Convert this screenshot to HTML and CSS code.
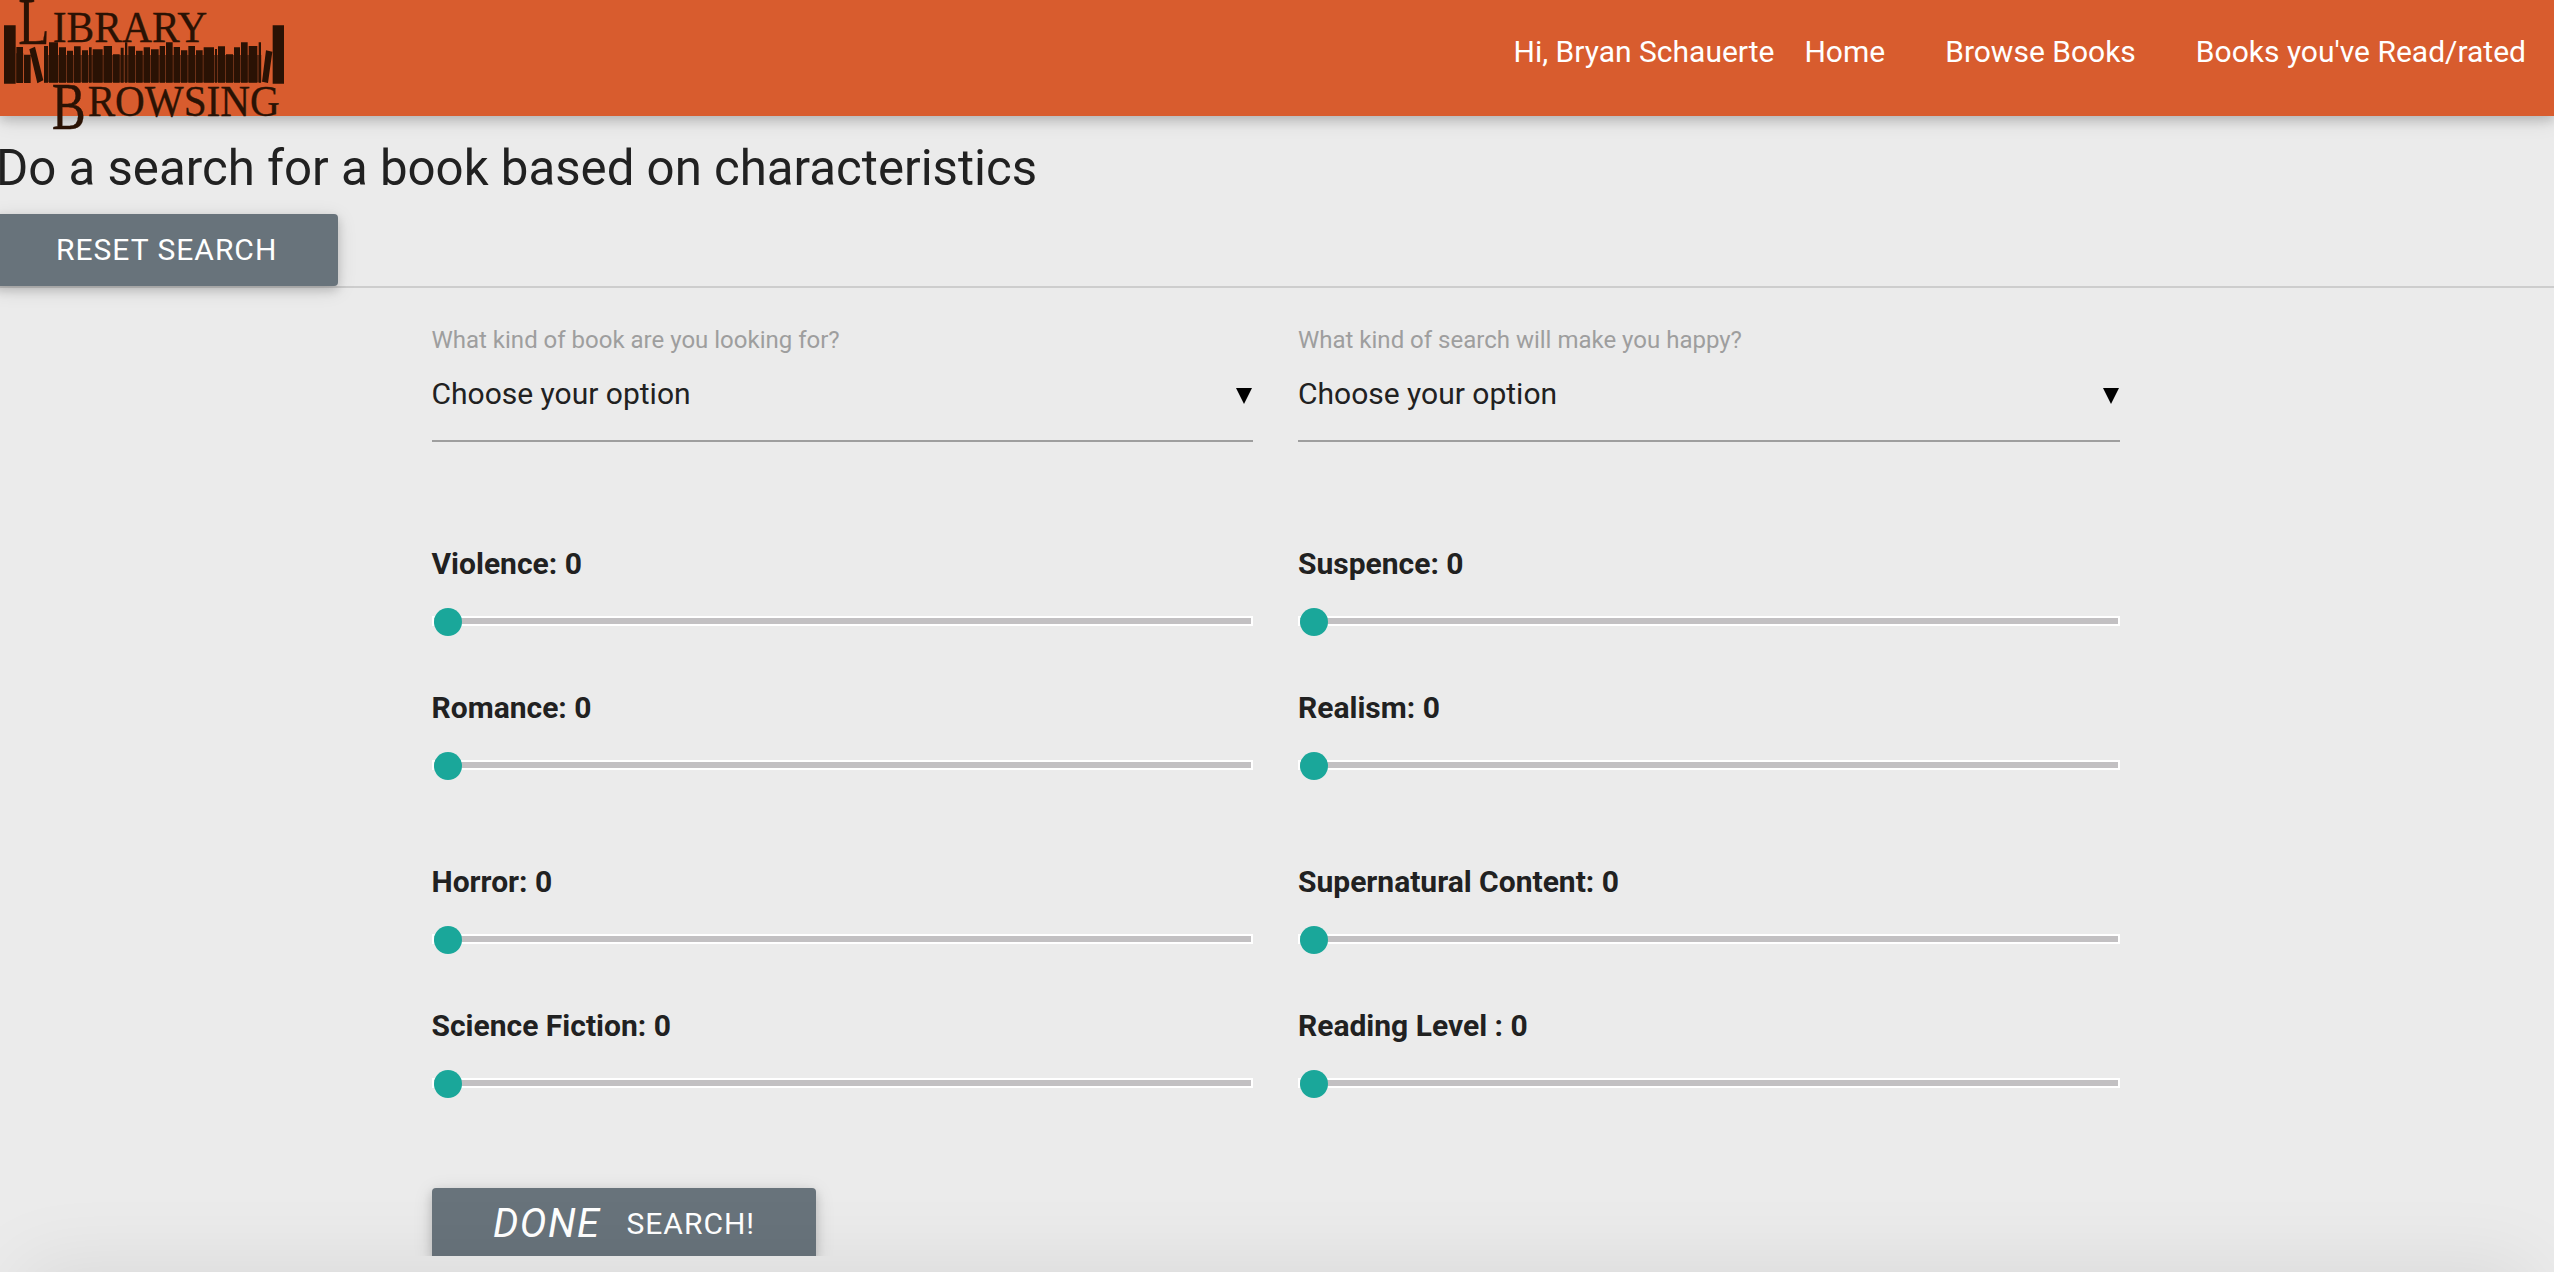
FILE: index.html
```html
<!DOCTYPE html>
<html lang="en">
<head>
<meta charset="utf-8">
<title>Library Browsing</title>
<link rel="stylesheet" href="styles.css">
</head>
<body>
<nav class="nav">
  <a class="logo" href="#">
    <svg width="300" height="134" viewBox="0 0 900 402" aria-label="Library Browsing">
      <g class="logo-text">
        <text x="55" y="132" font-size="202" textLength="94" lengthAdjust="spacingAndGlyphs">L</text>
        <text x="158" y="125" font-size="136" textLength="464" lengthAdjust="spacingAndGlyphs">IBRARY</text>
        <text x="155" y="388" font-size="202" textLength="102" lengthAdjust="spacingAndGlyphs">B</text>
        <text x="263" y="347" font-size="132" textLength="576" lengthAdjust="spacingAndGlyphs">ROWSING</text>
      </g>
      <path class="shelf" d="M48 160H70V247H48zM132 165H784V247H132z"/>
      <path class="books" d="M12 76H47V251H12zM818 76H852V251H818zM49 141H69V249H49zM72 164H92V249H72zM88 148L105 140L130 241L112 250zM132 138H144V248H132zM147 127H174V248H147zM177 142H198V248H177zM201 152H219V248H201zM222 139H242V248H222zM246 151H264V248H246zM267 142H275V248H267zM278 148H308V248H278zM311 138H336V248H311zM339 163H359V248H339zM362 143H371V248H362zM375 127H382V248H375zM385 139H405V248H385zM408 152H428V248H408zM431 142H450V248H431zM453 148H476V248H453zM479 138H495V248H479zM498 127H518V248H498zM521 141H540V248H521zM543 151H562V248H543zM565 138H585V248H565zM588 151H608V248H588zM611 142H642V248H611zM645 147H651V248H645zM654 139H675V248H654zM678 163H699V248H678zM702 142H720V248H702zM723 127H743V248H723zM746 138H772V248H746zM776 127H783V248H776zM798 151L817 155L804 249L786 245z"/>
    </svg>
  </a>
  <span class="greeting">Hi, Bryan Schauerte</span>
  <a class="nav-link" href="#">Home</a>
  <a class="nav-link" href="#">Browse Books</a>
  <a class="nav-link" href="#">Books you've Read/rated</a>
</nav>
<main class="page">
  <header class="intro">
    <h1 class="title">Do a search for a book based on characteristics</h1>
    <button class="btn reset">Reset Search</button>
  </header>
  <form class="form">
    <div class="grid selects">
      <div class="field"><label class="field-label">What kind of book are you looking for?</label><div class="select"><span>Choose your option</span><i class="caret"></i></div></div>
      <div class="field"><label class="field-label">What kind of search will make you happy?</label><div class="select"><span>Choose your option</span><i class="caret"></i></div></div>
    </div>
    <div class="grid sliders">
      <div class="slider"><b class="name">Violence: 0</b><div class="track"><i class="thumb"></i></div></div>
      <div class="slider"><b class="name">Suspence: 0</b><div class="track"><i class="thumb"></i></div></div>
      <div class="slider"><b class="name">Romance: 0</b><div class="track"><i class="thumb"></i></div></div>
      <div class="slider"><b class="name">Realism: 0</b><div class="track"><i class="thumb"></i></div></div>
    </div>
    <div class="grid sliders">
      <div class="slider"><b class="name">Horror: 0</b><div class="track"><i class="thumb"></i></div></div>
      <div class="slider"><b class="name">Supernatural Content: 0</b><div class="track"><i class="thumb"></i></div></div>
      <div class="slider"><b class="name">Science Fiction: 0</b><div class="track"><i class="thumb"></i></div></div>
      <div class="slider"><b class="name">Reading Level : 0</b><div class="track"><i class="thumb"></i></div></div>
    </div>
    <button class="btn submit"><i class="done">done</i><span>Search!</span></button>
  </form>
</main>
<div class="sheet"><div class="sheet-shadow"></div></div>
</body>
</html>
```
FILE: styles.css
```css
* { box-sizing: border-box; }
body {
  margin: 0;
  height: 1272px;
  position: relative;
  overflow: hidden;
  background: #ebebeb;
  color: #212121;
  font: 30px/45px Roboto, sans-serif;
}
.nav {
  position: relative;
  z-index: 1;
  display: flex;
  justify-content: flex-end;
  height: 116px;
  padding-top: 29px;
  background: #d85c2e;
  color: #fff;
  box-shadow: 0 4px 10px rgba(0,0,0,.16), 0 4px 20px rgba(0,0,0,.12);
}
.logo { position: absolute; left: 0; top: 0; }
.logo svg { display: block; }
.logo-text { fill: #2a1204; stroke: #2a1204; stroke-width: 1; font-family: "Liberation Serif", serif; }
.books { fill: #2a1204; }
.shelf { fill: #6b3017; }
.nav-link { padding: 0 30px; color: #fff; text-decoration: none; }
.nav-link:last-child { padding-right: 28px; }
.page { height: 1140px; overflow: hidden; }
.intro { height: 172px; padding-top: 22px; border-bottom: 2px solid #cdcdcd; }
.title { margin: 0 0 16px -4px; font-size: 49.2px; line-height: 60px; font-weight: 400; }
.btn {
  display: flex;
  align-items: center;
  height: 72px;
  border: 0;
  border-radius: 4px;
  background: #68737b;
  color: #fff;
  font: 30px/72px Roboto, sans-serif;
  letter-spacing: 1px;
  text-transform: uppercase;
  box-shadow: 0 4px 10px rgba(0,0,0,.16), 0 4px 20px rgba(0,0,0,.12);
}
.reset { width: 344px; margin-left: -6px; padding: 0 0 0 62px; }
.form { padding: 0 432px; }
.grid { display: grid; grid-template-columns: 821.5px 822px; column-gap: 45px; margin-left: -0.5px; }
.selects { padding-top: 34px; height: 248px; }
.field-label { display: block; font-size: 24px; line-height: 36px; color: #9e9e9e; }
.select {
  display: flex;
  justify-content: space-between;
  height: 84px;
  padding-top: 13px;
  border-bottom: 2px solid #9e9e9e;
}
.caret {
  width: 16px;
  height: 16px;
  margin: 17px 1px 0 0;
  background: #000;
  clip-path: polygon(0 0, 100% 0, 50% 100%);
}
.sliders { height: 318px; grid-auto-rows: 144px; }
.slider { padding-top: 5px; }
.name { display: block; height: 75px; font-weight: 700; }
.track { height: 10px; border: 2px solid #fff; background: #c2c0c2; display: flex; align-items: center; }
.thumb { width: 28px; height: 28px; margin-top: 2px; flex: none; border-radius: 50%; background: #1aa79a; }
.submit { width: 384px; margin-top: 16px; padding: 0 0 0 61px; }
.done { font-size: 40px; letter-spacing: 1.4px; margin-right: 26px; }
.sheet {
  position: absolute;
  z-index: 2;
  left: 0;
  right: 0;
  bottom: 0;
  height: 112px;
  overflow: hidden;
  pointer-events: none;
}
.sheet-shadow {
  height: 112px;
  margin: 112px 28px 0;
  box-shadow: 0 0 80px 6px rgba(0,0,0,.08);
}
```
